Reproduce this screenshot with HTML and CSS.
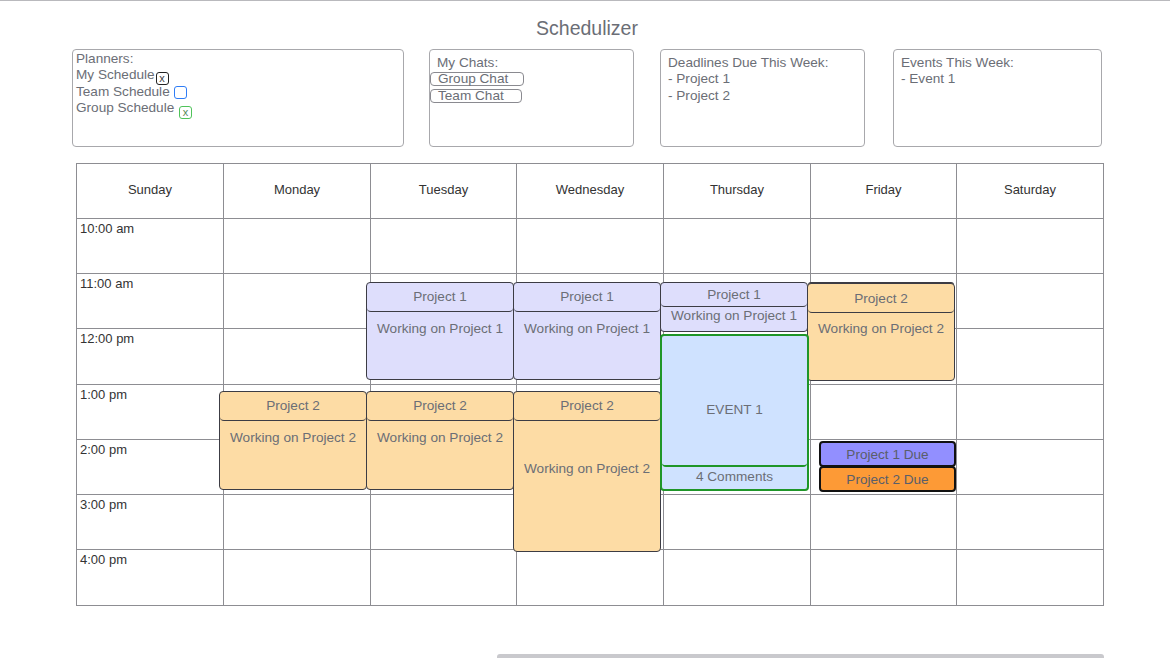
FILE: index.html
```html
<!DOCTYPE html>
<html>
<head>
<meta charset="utf-8">
<link rel="stylesheet" href="styles.css">
</head>
<body>
<div class="page">
  <h1 class="title">Schedulizer</h1>
  <div class="panels">
    <div class="panel planners">
      <div class="prow">Planners:</div>
      <div class="prow">My Schedule<span class="chk chk-black">x</span></div>
      <div class="prow">Team Schedule <span class="chk chk-blue"></span></div>
      <div class="prow">Group Schedule <span class="chk chk-green">x</span></div>
    </div>
    <div class="panel chats">
      <div class="chats-title">My Chats:</div>
      <div class="pill pill-group">Group Chat</div>
      <div class="pill pill-team">Team Chat</div>
    </div>
    <div class="panel deadlines">
      <div>Deadlines Due This Week:</div>
      <div>- Project 1</div>
      <div>- Project 2</div>
    </div>
    <div class="panel events">
      <div>Events This Week:</div>
      <div>- Event 1</div>
    </div>
  </div>

  <div class="calendar">
    <div class="cell head">Sunday</div>
    <div class="cell head">Monday</div>
    <div class="cell head">Tuesday</div>
    <div class="cell head">Wednesday</div>
    <div class="cell head">Thursday</div>
    <div class="cell head">Friday</div>
    <div class="cell head">Saturday</div>

    <div class="cell time">10:00 am</div><div class="cell"></div><div class="cell"></div><div class="cell"></div><div class="cell"></div><div class="cell"></div><div class="cell"></div>
    <div class="cell time">11:00 am</div><div class="cell"></div><div class="cell"></div><div class="cell"></div><div class="cell"></div><div class="cell"></div><div class="cell"></div>
    <div class="cell time">12:00 pm</div><div class="cell"></div><div class="cell"></div><div class="cell"></div><div class="cell"></div><div class="cell"></div><div class="cell"></div>
    <div class="cell time">1:00 pm</div><div class="cell"></div><div class="cell"></div><div class="cell"></div><div class="cell"></div><div class="cell"></div><div class="cell"></div>
    <div class="cell time">2:00 pm</div><div class="cell"></div><div class="cell"></div><div class="cell"></div><div class="cell"></div><div class="cell"></div><div class="cell"></div>
    <div class="cell time">3:00 pm</div><div class="cell"></div><div class="cell"></div><div class="cell"></div><div class="cell"></div><div class="cell"></div><div class="cell"></div>
    <div class="cell time">4:00 pm</div><div class="cell"></div><div class="cell"></div><div class="cell"></div><div class="cell"></div><div class="cell"></div><div class="cell"></div>

    <div class="ev p2 mon-p2">
      <div class="ev-head">Project 2</div>
      <div class="ev-body">Working on Project 2</div>
    </div>
    <div class="ev p1 tue-p1">
      <div class="ev-head">Project 1</div>
      <div class="ev-body">Working on Project 1</div>
    </div>
    <div class="ev p2 tue-p2">
      <div class="ev-head">Project 2</div>
      <div class="ev-body">Working on Project 2</div>
    </div>
    <div class="ev p1 wed-p1">
      <div class="ev-head">Project 1</div>
      <div class="ev-body">Working on Project 1</div>
    </div>
    <div class="ev p2 wed-p2">
      <div class="ev-head">Project 2</div>
      <div class="ev-body">Working on Project 2</div>
    </div>
    <div class="ev p1 thu-p1">
      <div class="ev-head">Project 1</div>
      <div class="ev-body">Working on Project 1</div>
    </div>
    <div class="ev p2 fri-p2">
      <div class="ev-head">Project 2</div>
      <div class="ev-body">Working on Project 2</div>
    </div>
    <div class="event1">
      <div class="event1-main">EVENT 1</div>
      <div class="event1-comments">4 Comments</div>
    </div>
    <div class="due due1">Project 1 Due</div>
    <div class="due due2">Project 2 Due</div>
  </div>

  <div class="hbar"></div>
</div>
</body>
</html>
```

FILE: styles.css
```css
html, body {
  margin: 0;
  padding: 0;
  background: #ffffff;
}

body {
  font-family: "Liberation Sans", Arial, sans-serif;
  color: #6b6e76;
}

.page {
  border-top: 1px solid #b9b9bd;
  width: 1170px;
  height: 657px;
  overflow: hidden;
}

.title {
  margin: 15px 0 0 0;
  height: 24px;
  line-height: 24px;
  font-size: 19.5px;
  font-weight: normal;
  text-align: center;
  color: #6b6e76;
  padding-left: 4px;
}

.panels {
  display: flex;
  margin: 9px 0 0 72px;
  height: 98px;
}

.panel {
  box-sizing: border-box;
  height: 98px;
  border: 1px solid #a8a8ac;
  border-radius: 4px;
  font-size: 13.6px;
  line-height: 16.3px;
}

.planners {
  width: 332px;
  padding: 1px 0 0 3px;
}

.prow {
  height: 16.3px;
}

.chats {
  width: 205px;
  margin-left: 25px;
  padding: 5px 0 0 0;
}

.chats-title {
  padding-left: 7px;
  margin-bottom: 1px;
}

.deadlines {
  width: 205px;
  margin-left: 26px;
  padding: 5px 0 0 7px;
}

.events {
  width: 209px;
  margin-left: 28px;
  padding: 5px 0 0 7px;
}

.chk {
  display: inline-block;
  box-sizing: border-box;
  width: 13px;
  height: 13px;
  border-radius: 3px;
  border: 1px solid #222;
  font-size: 11px;
  line-height: 10px;
  text-align: center;
  vertical-align: -3px;
  color: #444;
  margin-left: 1px;
}

.chk-blue {
  border-color: #2f7df6;
  border-width: 1.5px;
}

.chk-green {
  border-color: #4fc35a;
  color: #5a8a5a;
  width: 13px;
  height: 13px;
  vertical-align: -4px;
}

.pill {
  box-sizing: border-box;
  height: 14px;
  border: 1px solid #8a8a90;
  border-radius: 4px;
  line-height: 12px;
  padding-left: 7px;
  font-size: 13.6px;
  margin-bottom: 3px;
}

.pill-group { width: 94px; }
.pill-team { width: 92px; }

.calendar {
  position: relative;
  display: grid;
  grid-template-columns: 147px 147px 146px 147px 147px 146px 147px;
  grid-template-rows: 55px 55px 55px 56px 55px 55px 55px 56px;
  width: 1027px;
  margin: 16px 0 0 76px;
  border-top: 1px solid #8d8d92;
  border-left: 1px solid #8d8d92;
}

.cell {
  box-sizing: border-box;
  border-right: 1px solid #8d8d92;
  border-bottom: 1px solid #8d8d92;
}

.head {
  display: flex;
  align-items: center;
  justify-content: center;
  font-size: 13px;
  color: #333;
  padding-bottom: 4px;
}

.time {
  font-size: 13px;
  color: #333;
  padding: 2px 0 0 3px;
  line-height: 15px;
}

.ev {
  position: absolute;
  box-sizing: border-box;
  width: 148px;
  border: 1px solid #3c3c44;
  border-radius: 4px;
  font-size: 13.6px;
  display: flex;
  flex-direction: column;
  text-align: center;
}

.p1 { background: #dedefc; }
.p2 { background: #fddca5; }

.ev-head {
  height: 28px;
  line-height: 28px;
  border-bottom: 1px solid #3c3c44;
  border-radius: 4px;
  flex: none;
}

.ev-body {
  padding-top: 8px;
  line-height: 17px;
}

.mon-p2 { left: 142px; top: 227px; height: 99px; }
.tue-p1 { left: 289px; top: 118px; height: 98px; }
.tue-p2 { left: 289px; top: 227px; height: 99px; }
.wed-p1 { left: 436px; top: 118px; height: 98px; }
.wed-p2 { left: 436px; top: 227px; height: 161px; }
.wed-p2 .ev-body { padding-top: 39px; }
.thu-p1 { left: 583px; top: 118px; height: 50px; }
.thu-p1 .ev-head { height: 23px; line-height: 24px; }
.thu-p1 .ev-body { padding-top: 0; }
.fri-p2 { left: 730px; top: 119px; height: 98px; box-shadow: 0 -2px 0 -1px #3c3c44; }
.fri-p2 .ev-head { line-height: 30px; }
.fri-p2 .ev-body { padding-top: 7px; }

.event1 {
  position: absolute;
  box-sizing: border-box;
  left: 583px;
  top: 170px;
  width: 149px;
  height: 157px;
  border: 2px solid #1f9628;
  border-radius: 4px;
  background: #cfe2ff;
  display: flex;
  flex-direction: column;
  font-size: 13.6px;
  text-align: center;
}

.event1-main {
  flex: 1;
  display: flex;
  align-items: center;
  justify-content: center;
  padding-top: 18px;
  box-sizing: border-box;
  border-bottom: 2px solid #1f9628;
  border-radius: 4px;
}

.event1-comments {
  height: 22px;
  line-height: 20px;
  flex: none;
}

.due {
  position: absolute;
  box-sizing: border-box;
  left: 742px;
  width: 137px;
  height: 26px;
  border: 2px solid #111;
  border-radius: 4px;
  font-size: 13.6px;
  line-height: 24px;
  text-align: center;
  color: #5a5e6a;
}

.due1 { top: 277px; background: #928fff; }
.due2 { top: 302px; background: #fd9a36; }

.hbar {
  margin: 48px 0 0 497px;
  width: 607px;
  height: 6px;
  background: #c9c9cd;
  border-radius: 3px 3px 0 0;
}
```
